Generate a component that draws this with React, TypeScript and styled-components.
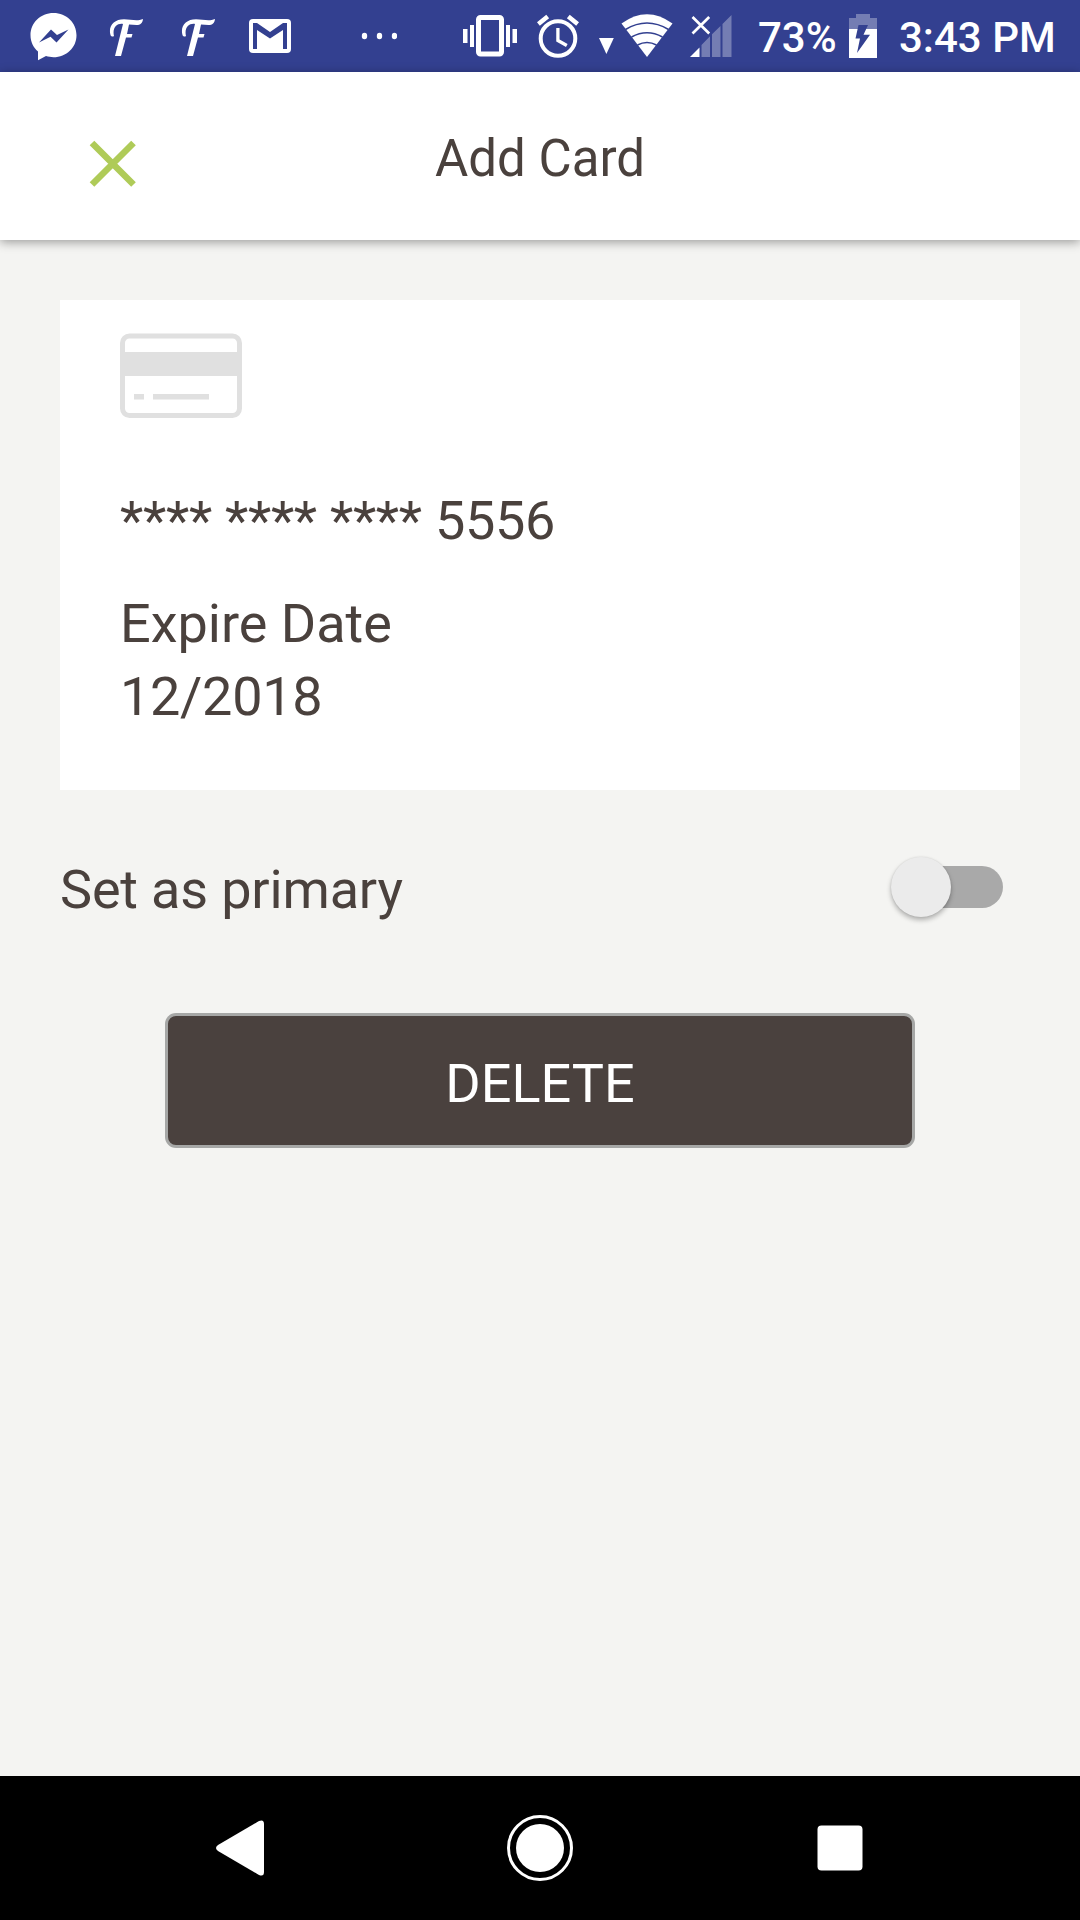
import React from "react";
import styled, { createGlobalStyle } from "styled-components";

const GlobalStyle = createGlobalStyle`
  * { box-sizing: border-box; }
  body { margin: 0; background: #f4f4f2; }
`;

const Screen = styled.div`
  display: flex;
  flex-direction: column;
  width: 1080px;
  height: 1920px;
  background: #f4f4f2;
  color: #4a413d;
  font-family: Roboto, "Liberation Sans", sans-serif;
  font-size: 54px;
  line-height: 73px;
  overflow: hidden;
`;

const StatusBar = styled.div`
  display: flex;
  justify-content: space-between;
  flex: none;
  height: 72px;
  padding-left: 28px;
  padding-right: 24px;
  background: #334090;
  color: #fff;
`;

const StatusGroup = styled.div`
  display: flex;
  align-items: center;
`;

const StatusIcon = styled.svg<{ $w: number; $gap?: number }>`
  display: block;
  flex: none;
  width: ${(p) => p.$w}px;
  height: 72px;
  margin-left: ${(p) => p.$gap ?? 0}px;
  fill: #fff;
`;

const StatusText = styled.span<{ $w: number; $gap: number }>`
  width: ${(p) => p.$w}px;
  margin-left: ${(p) => p.$gap}px;
  padding-top: 3px;
  font-size: 42px;
  font-weight: 500;
  line-height: 50px;
  white-space: nowrap;
`;

const Header = styled.header`
  display: grid;
  grid-template-columns: 1fr auto 1fr;
  align-items: center;
  flex: none;
  z-index: 1;
  height: 168px;
  padding: 6px 86px 0;
  background: #fff;
  box-shadow: 0 2px 10px rgba(0, 0, 0, 0.38);
`;

const Title = styled.h1`
  margin: 0;
  font-size: 51px;
  font-weight: 400;
  line-height: 64px;
`;

const CloseButton = styled.button`
  width: 54px;
  height: 54px;
  padding: 0;
  margin-top: 9px;
  border: 0;
  background: none;
`;

const Drawing = styled.svg`
  display: block;
`;

const Content = styled.main`
  display: flex;
  flex-direction: column;
  flex: 1;
  padding: 60px;
`;

const Card = styled.section`
  height: 490px;
  padding: 33px 60px 0;
  background: #fff;
`;

const CardNumber = styled.div`
  margin-top: 66px;
  letter-spacing: -0.29px;
`;

const Expiry = styled.div`
  margin-top: 30px;
`;

const ExpiryDate = styled.div`
  letter-spacing: -0.3px;
`;

const PrimaryRow = styled.div`
  display: flex;
  align-items: center;
  justify-content: space-between;
  height: 73px;
  margin-top: 63px;
  padding-right: 17px;
  letter-spacing: -0.17px;
`;

const Track = styled.div`
  display: flex;
  align-items: center;
  width: 103px;
  height: 42px;
  margin-top: -5px;
  border-radius: 21px;
  background: #a9a9a9;
`;

const Thumb = styled.div`
  width: 60px;
  height: 60px;
  margin-left: -9px;
  margin-top: -1px;
  border-radius: 50%;
  background: #ebebeb;
  box-shadow: 0 3px 5px rgba(0, 0, 0, 0.28), 0 0 2px rgba(0, 0, 0, 0.1);
`;

const DeleteButton = styled.button`
  align-self: center;
  width: 750px;
  height: 135px;
  margin-top: 87px;
  padding: 6px 0 0;
  border: 3px solid #a6a7a6;
  border-radius: 11px;
  background: #4a413e;
  color: #fff;
  font: inherit;
`;

const NavBar = styled.nav`
  display: flex;
  align-items: center;
  justify-content: space-between;
  flex: none;
  height: 144px;
  padding: 0 216px;
  background: #000;
`;

const FLogo = ({ gap }: { gap: number }) => (
  <StatusIcon $w={36} $gap={gap} viewBox="0 0 36 72">
    <path d="M1.500 35C-1 26 5 19.300 15 19.300C22 19.300 28 21.500 34 19C33.500 23 31.500 25 27.500 25L20 24.500L18 34H23.500L22.500 37.500H17L12 56H6L14 24C8 23 3 28 5 36C3.500 37 2 36.500 1.500 35Z" />
  </StatusIcon>
);

export default function App() {
  return (
    <Screen>
      <GlobalStyle />
      <StatusBar>
        <StatusGroup>
          <StatusIcon $w={50} viewBox="28 0 50 72">
            <path
              fillRule="evenodd"
              d="M53.500 13C40.500 13 30.500 22.800 30.500 35.200C30.500 42 33.500 47.500 38 51.500V60.300L46 56C48.300 56.700 51 57.200 53.500 57.200C66.500 57.200 76.500 47.500 76.500 35.200C76.500 22.800 66.500 13 53.500 13ZM39 42.500L51 29.500L57 35L68.500 29.500L56.500 42.500L50.500 36.700Z"
            />
          </StatusIcon>
          <FLogo gap={31} />
          <FLogo gap={36} />
          <StatusIcon $w={42} $gap={32} viewBox="249 0 42 72">
            <rect x="249" y="19" width="42" height="34" rx="4" />
            <path fill="#334090" d="M253 49V23H257L270 32L283 23H287V49H283V30L270 38.500L257 30V49Z" />
          </StatusIcon>
          <StatusIcon $w={36} $gap={70} viewBox="361 0 36 72">
            <ellipse cx="364.500" cy="36" rx="2.700" ry="3.200" />
            <ellipse cx="379.500" cy="36" rx="2.700" ry="3.200" />
            <ellipse cx="394.500" cy="36" rx="2.700" ry="3.200" />
          </StatusIcon>
        </StatusGroup>
        <StatusGroup>
          <StatusIcon $w={54} viewBox="462 0 54 72">
            <rect x="477.500" y="17.500" width="23" height="36.500" rx="2" fill="none" stroke="#fff" strokeWidth="5" />
            <path d="M462 29H466.500V43H462ZM469 25H473V47H469ZM505 25H509V47H505ZM511.500 29H516V43H511.500Z" />
          </StatusIcon>
          <StatusIcon $w={42} $gap={20} viewBox="536.5 0 42 72">
            <circle cx="557.500" cy="38.500" r="17.300" fill="none" stroke="#fff" strokeWidth="4" />
            <path
              d="M537.900 24L547.200 16.500M577.100 24L567.800 16.500"
              stroke="#fff"
              strokeWidth="4.500"
            />
            <path d="M557.400 28V40.500L566.300 45.500" fill="none" stroke="#fff" strokeWidth="3.300" />
          </StatusIcon>
          <StatusIcon $w={16} $gap={19.5} viewBox="598 0 16 72">
            <path d="M598 38H612.800L605.400 54Z" />
          </StatusIcon>
          <StatusIcon $w={52} $gap={6} viewBox="620.5 0 52 72">
            <path d="M646.500 57L621 23.500Q646.500 5 672 23.500Z" />
            <g fill="none" stroke="#334090" strokeWidth="1.500">
              <path d="M625 29.500Q646.500 16.500 668 29.500" />
              <path d="M631 37Q646.500 28.500 662 37" />
              <path d="M637 45Q646.500 40 656 45" />
            </g>
          </StatusIcon>
          <StatusIcon $w={42} $gap={17.5} viewBox="690.5 0 42 72">
            <path opacity=".32" d="M702 57V45L710.500 36.300V57ZM712.500 57V34.300L721 26V57ZM723 57V24L732 15V57Z" />
            <path d="M690.500 57L700 47.500V57Z" />
            <path d="M693 17L709.700 33.500M709.700 17L693 33.500" stroke="#fff" strokeWidth="2.700" />
          </StatusIcon>
          <StatusText $w={80} $gap={26}>73%</StatusText>
          <StatusIcon $w={28} $gap={11} viewBox="849 0 28 72">
            <path opacity=".32" d="M849 29V18H856V14H870V18H877V29Z" />
            <path d="M849 29H877V58H849Z" />
            <path fill="#334090" d="M858.500 25H868L863.500 34.700H870L857 53L860 38.500H855.500Z" />
          </StatusIcon>
          <StatusText $w={157} $gap={22}>3:43 PM</StatusText>
        </StatusGroup>
      </StatusBar>

      <Header>
        <CloseButton aria-label="Close">
          <Drawing width="54" height="54" viewBox="0 0 54 54">
            <path d="M6 6L47.500 47.500M47.500 6L6 47.500" stroke="#afcb58" strokeWidth="6.500" />
          </Drawing>
        </CloseButton>
        <Title>Add Card</Title>
      </Header>

      <Content>
        <Card>
          <Drawing width="122" height="85" viewBox="0 0 122 85">
            <rect x="2.500" y="3" width="117" height="79.500" rx="7" fill="none" stroke="#e0e0e0" strokeWidth="5" />
            <path fill="#e0e0e0" d="M3 19H119V43H3ZM14 61H24V66.500H14ZM33 61H89V66.500H33Z" />
          </Drawing>
          <CardNumber>**** **** **** 5556</CardNumber>
          <Expiry>
            <div>Expire Date</div>
            <ExpiryDate>12/2018</ExpiryDate>
          </Expiry>
        </Card>
        <PrimaryRow>
          <span>Set as primary</span>
          <Track role="switch" aria-checked="false">
            <Thumb />
          </Track>
        </PrimaryRow>
        <DeleteButton>DELETE</DeleteButton>
      </Content>

      <NavBar>
        <Drawing width="48" height="56" viewBox="0 0 48 56">
          <path fill="#fff" d="M2 25L43 1Q48-1 48 4V52Q48 57 43 55L2 31Q-2 28 2 25Z" />
        </Drawing>
        <Drawing width="66" height="66" viewBox="0 0 66 66">
          <circle cx="33" cy="33" r="31.500" fill="none" stroke="#fff" strokeWidth="3" />
          <circle cx="33" cy="33" r="24" fill="#fff" />
        </Drawing>
        <Drawing width="48" height="46" viewBox="0 0 48 46">
          <rect x="1.500" y=".5" width="45" height="45" rx="4" fill="#fff" />
        </Drawing>
      </NavBar>
    </Screen>
  );
}
